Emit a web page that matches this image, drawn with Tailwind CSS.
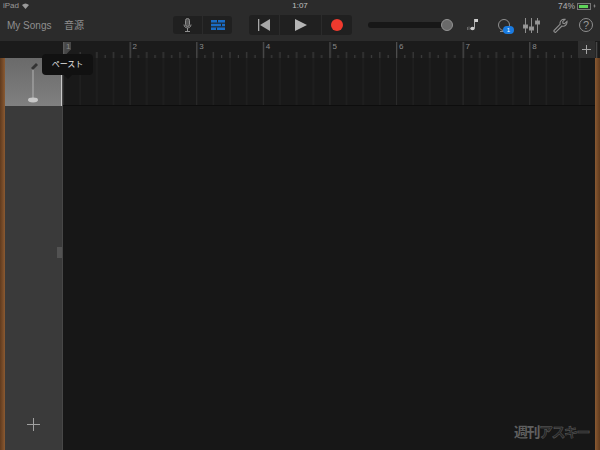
<!DOCTYPE html>
<html lang="ja">
<head>
<meta charset="UTF-8">
<title>GarageBand</title>
<script src="https://cdn.jsdelivr.net/npm/@tailwindcss/browser@4"></script>
</head>
<body class="bg-[#171717] font-['Liberation_Sans','Noto_Sans_CJK_JP',sans-serif]">
<div class="relative w-[600px] h-[450px] overflow-hidden flex flex-col">

  <!-- status bar + toolbar -->
  <div class="h-[41px] bg-[#2b2b2b] shrink-0 flex flex-col">
    <div class="h-[12px] flex items-center justify-between pl-[3px] pr-[4px] text-[8px] text-[#9a9a9a] leading-none">
      <div class="flex items-center gap-[3px] w-[200px]">
        <span>iPad</span>
        <svg width="7" height="6" viewBox="0 0 7 6"><path d="M0 2 Q3.5 -1 7 2 L3.5 6Z" fill="#9a9a9a"/></svg>
      </div>
      <span class="text-[#c0c0c0] ml-px">1:07</span>
      <div class="flex items-center justify-end gap-[2px] w-[200px]">
        <span class="text-[8.5px] text-[#b0b0b0]">74%</span>
        <div class="w-[14px] h-[7px] border border-[#777] p-px"><div class="w-[9px] h-full bg-[#5fd35a]"></div></div>
        <svg width="3" height="6" viewBox="0 0 4 6"><path d="M2.5 0 L0.5 3.4 H2 L1.5 6 L3.5 2.6 H2Z" fill="#aaa"/></svg>
      </div>
    </div>
    <div class="h-[24px] mt-px flex items-center text-[#8f8f8f]">
      <span class="ml-[7px] w-[57px] text-[10px]">My Songs</span>
      <span class="w-[109px] text-[10px]">音源</span>
      <div class="w-[59px] h-[18px] bg-[#202020] rounded-[3px] flex">
        <div class="w-[30px] flex items-center justify-center border-r border-[#2b2b2b]">
          <svg width="9" height="14" viewBox="0 0 9 14" fill="none" stroke="#8f8f8f"><rect x="2.5" y="0.5" width="4" height="8" rx="2" fill="#555"/><path d="M1 6.5 C1 11 8 11 8 6.5 M4.5 10 V13 M2 13.5 H7"/></svg>
        </div>
        <div class="flex-1 flex items-center justify-center">
          <svg width="14" height="10" viewBox="0 0 14 10" fill="#1a6cc5"><rect x="0" y="0" width="14" height="2.6"/><rect x="0" y="3.7" width="14" height="2.6"/><rect x="0" y="7.4" width="14" height="2.6"/><path d="M6 0h1v2.6H6zM10 3.7h1v2.6h-1zM5 7.4h1V10H5z" fill="#202020"/></svg>
        </div>
      </div>
      <div class="ml-[17px] w-[103px] h-[20px] bg-[#202020] rounded-[3px] flex">
        <div class="w-[31px] flex items-center justify-center border-r border-[#2b2b2b]">
          <svg width="12" height="12" viewBox="0 0 12 12" fill="#a8a8a8"><rect x="0" y="0" width="1.3" height="12"/><path d="M12 0 V12 L2 6Z"/></svg>
        </div>
        <div class="w-[42px] flex items-center justify-center border-r border-[#2b2b2b]">
          <svg width="12" height="12" viewBox="0 0 12 12" fill="#b5b5b5"><path d="M0 0 V12 L12 6Z"/></svg>
        </div>
        <div class="flex-1 flex items-center justify-center">
          <div class="w-[12px] h-[12px] rounded-full bg-[#f03a2e]"></div>
        </div>
      </div>
      <div class="ml-[16px] w-[79px] h-[6px] rounded-full bg-[#171717] relative">
        <div class="absolute right-[-6px] top-[-3px] w-[12px] h-[12px] rounded-full bg-[#6a6a6a] border border-[#949494]"></div>
      </div>
      <div class="ml-[19px] w-[14px] flex justify-center">
        <svg width="14" height="14" viewBox="0 0 14 14" fill="none"><path d="M8.5 1 V10" stroke="#aaa"/><path d="M8.5 1 H12 V4 H8.5Z" fill="#ccc"/><ellipse cx="6.5" cy="10.5" rx="2.2" ry="1.7" fill="#ccc"/><path d="M1.5 9 V12 M3 8.5 V12" stroke="#666"/></svg>
      </div>
      <div class="ml-[16px] w-[17px] relative">
        <svg width="17" height="15" viewBox="0 0 17 15" fill="none" stroke="#8f8f8f"><circle cx="8" cy="7" r="5.5"/><path d="M4 13.5 H15"/></svg>
        <div class="absolute left-[7px] top-[8px] w-[11px] h-[8px] rounded-full bg-[#1a7be0] text-white text-[6px] leading-[8px] text-center">1</div>
      </div>
      <div class="ml-[10px] w-[17px]">
        <svg width="17" height="15" viewBox="0 0 17 15" fill="none" stroke="#8f8f8f"><path d="M2.5 0 V15 M8.5 0 V15 M14.5 0 V15"/><rect x="0.5" y="7" width="4" height="3" fill="#999"/><rect x="6.5" y="9" width="4" height="3" fill="#999"/><rect x="12.5" y="3" width="4" height="3" fill="#999"/></svg>
      </div>
      <div class="ml-[13px] w-[14px]">
        <svg width="15" height="15" viewBox="0 0 15 15" fill="none" stroke="#8f8f8f" stroke-width="1.1"><path d="M1 12.5 L7.2 6.2 C6.4 3.5 8.8 0.7 12 1.3 L9.7 3.7 L10 5.3 L11.6 5.7 L14 3.4 C14.4 6.6 11.6 8.9 9 8 L2.8 14.2 C2 14.8 0.5 13.5 1 12.5Z"/></svg>
      </div>
      <div class="ml-[12px] w-[14px] h-[14px] rounded-full border border-[#8f8f8f] text-[11px] leading-[12px] text-center text-[#999]">?</div>
    </div>
  </div>

  <!-- ruler -->
  <div class="h-[17px] bg-[#1b1b1b] shrink-0 relative flex pl-[63px]">
    <svg class="absolute left-[63px] top-0" width="537" height="17">
      <defs>
        <pattern id="ruler" width="66.6" height="17" patternUnits="userSpaceOnUse">
          <rect x="0" y="1" width="1.3" height="16" fill="#4d4d4d"/>
          <g fill="#424242">
            <rect x="8.3" y="14" width="1" height="3"/><rect x="16.6" y="11" width="1" height="6"/>
            <rect x="25" y="14" width="1" height="3"/><rect x="33.3" y="11" width="1" height="6"/>
            <rect x="41.6" y="14" width="1" height="3"/><rect x="50" y="11" width="1" height="6"/>
            <rect x="58.3" y="14" width="1" height="3"/>
          </g>
        </pattern>
      </defs>
      <rect width="537" height="17" fill="url(#ruler)"/>
    </svg>
    <div class="relative flex text-[8px] leading-none text-[#8a8a8a] pt-[2px]">
      <span class="w-[66.6px] pl-[3px] text-[#bbb]">1</span><span class="w-[66.6px] pl-[3px]">2</span><span class="w-[66.6px] pl-[3px]">3</span><span class="w-[66.6px] pl-[3px]">4</span><span class="w-[66.6px] pl-[3px]">5</span><span class="w-[66.6px] pl-[3px]">6</span><span class="w-[66.6px] pl-[3px]">7</span><span class="w-[66.6px] pl-[3px]">8</span>
    </div>
    <div class="absolute left-[63px] top-[1px] w-[8px] h-[12px] bg-[#666]/60 [clip-path:polygon(0_0,100%_0,100%_60%,45%_100%,0_100%)]"></div>
    <div class="absolute right-[5px] top-0 w-[17px] h-[17px] bg-[#2e2e2e] flex items-center justify-center">
      <svg width="9" height="9" viewBox="0 0 9 9" stroke="#a5a5a5"><path d="M4.5 0 V9 M0 4.5 H9"/></svg>
    </div>
  </div>

  <!-- tracks -->
  <div class="flex-1 flex min-h-0">
    <div class="w-[5px] bg-gradient-to-r from-[#5f3a1e] to-[#8a5a32]"></div>
    <div class="w-[58px] bg-[#3a3a3a] border-r border-[#474747] flex flex-col relative">
      <div class="h-[48px] bg-gradient-to-b from-[#6a6a6a] to-[#808080] border-r border-[#c8c8c8] flex items-center justify-center">
        <svg width="14" height="42" viewBox="0 0 14 42" fill="none">
          <path d="M7 8 V37" stroke="#a8a8a8" stroke-width="1.2"/>
          <path d="M5 7 L10 2 L12 4 L7 9Z" fill="#333"/>
          <ellipse cx="7" cy="39" rx="5" ry="2.4" fill="#c8c8c8"/>
        </svg>
      </div>
      <div class="absolute right-0 top-[189px] w-[5px] h-[11px] bg-[#525252]"></div>
      <div class="mt-auto mb-[19px] flex justify-center">
        <svg width="13" height="13" viewBox="0 0 13 13" stroke="#a0a0a0"><path d="M6.5 0 V13 M0 6.5 H13"/></svg>
      </div>
    </div>
    <div class="flex-1 flex flex-col bg-[#171717]">
      <div class="h-[48px] border-b border-[#0d0d0d] bg-[#191919]">
        <svg width="532" height="47">
          <defs>
            <pattern id="beats" width="66.6" height="47" patternUnits="userSpaceOnUse">
              <g fill="#222">
                <rect x="0" width="1" height="47" fill="#2a2a2a"/>
                <rect x="16.6" width="1" height="47"/><rect x="33.3" width="1" height="47"/><rect x="50" width="1" height="47"/>
              </g>
            </pattern>
          </defs>
          <rect width="532" height="47" fill="url(#beats)"/>
        </svg>
      </div>
    </div>
    <div class="w-[5px] bg-gradient-to-r from-[#8a5a32] to-[#5f3a1e]"></div>
  </div>

  <!-- tooltip -->
  <div class="absolute left-[42px] top-[54px] w-[51px] h-[21px] bg-[#111] rounded-[4px] text-[#e5e5e5] text-[8px] leading-[21px] text-center">ペースト</div>
  <div class="absolute left-[64px] top-[75px] w-0 h-0 border-x-[4px] border-x-transparent border-t-[4px] border-t-[#111]"></div>

  <!-- watermark -->
  <div class="absolute right-[11px] bottom-[12px] flex items-center font-['Noto_Sans_CJK_JP',sans-serif] text-[14px] leading-none font-bold tracking-[-1.5px]">
    <span class="text-[#5f5f5f]">週刊</span><span class="text-[#262626] [-webkit-text-stroke:0.5px_#5f5f5f]">アスキー</span>
  </div>
</div>
</body>
</html>
